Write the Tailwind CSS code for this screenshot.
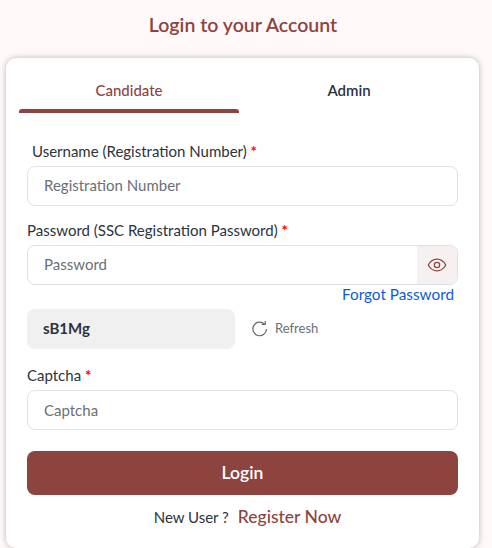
<!DOCTYPE html>
<html lang="en">
<head>
    <meta charset="UTF-8">
    <meta name="viewport" content="width=device-width, initial-scale=1.0">
    <title>Login</title>
    <script src="https://cdn.jsdelivr.net/npm/@tailwindcss/browser@4"></script>
</head>
<body class="bg-[#fffaf9] h-[548px] overflow-hidden font-['Lato','Noto_Sans',sans-serif] text-[#2b3340]">
    <h1 class="h-[58px] pr-[6px] pt-[14px] text-center text-[19.500px] leading-[22px] font-semibold text-[#8e443e]">Login to your Account</h1>

    <div class="ml-[6px] w-[473px] h-[490px] bg-white rounded-[10px] shadow-[0_0_6px_rgba(0,0,0,0.28)]">
        <div class="flex pl-[13px] pr-[13px]">
            <div class="w-[220px] h-[55px] flex flex-col justify-between pt-[23px] text-center text-[15px] leading-[18px] font-medium text-[#8e443e]">
                <span>Candidate</span>
                <div class="h-[4px] bg-[#8e443e] rounded-t-[3px]"></div>
            </div>
            <div class="flex-1 h-[55px] pt-[23px] pr-[7px] text-center text-[15px] leading-[18px] font-semibold">Admin</div>
        </div>

        <form class="px-[21px]">
            <label class="block mt-[29px] ml-[5px] text-[15px] leading-[18px]">Username (Registration Number) <span class="text-[#f00] font-bold">*</span></label>
            <input type="text" placeholder="Registration Number" class="block mt-[6px] w-[431px] h-[40px] px-[16px] pb-[2px] text-[15px] border border-[#dfe1e6] rounded-[8px] placeholder:text-[#6b6f76]">

            <label class="block mt-[15px] text-[15px] leading-[18px]">Password (SSC Registration Password) <span class="text-[#f00] font-bold">*</span></label>
            <div class="flex mt-[6px] w-[431px] h-[40px] border border-[#dfe1e6] rounded-[8px] overflow-hidden">
                <input type="password" placeholder="Password" class="flex-1 min-w-0 px-[16px] pb-[2px] text-[15px] placeholder:text-[#6b6f76]">
                <div class="w-[40px] flex items-center justify-center bg-[#f7f0f0]">
                    <svg class="w-[20px] h-[20px]" viewBox="0 0 24 24" fill="none" stroke="#8e443e" stroke-width="1.500"><path d="M1.500 12C4 7.500 7.700 5 12 5s8 2.500 10.500 7c-2.500 4.500-6.200 7-10.500 7s-8-2.500-10.500-7z"/><circle cx="12" cy="12" r="3.200"/></svg>
                </div>
            </div>
            <div class="pr-[4px] text-right text-[15.300px] leading-[18px] text-[#0d5bdd]">Forgot Password</div>

            <div class="flex items-center mt-[6px]">
                <div class="w-[208px] h-[40px] pl-[16px] pb-[2px] flex items-center bg-[#f0f0f0] rounded-[8px] text-[15px] font-bold">sB1Mg</div>
                <svg class="ml-[16px] w-[18px] h-[18px]" viewBox="0 0 18 18" fill="none" stroke="#666" stroke-width="1.200"><path d="M15.500 9a6.800 6.800 0 1 1-2.200-5.100"/><path d="M14.200 1v3.400h-3.400"/></svg>
                <span class="ml-[6px] text-[13px] text-[#6b6f76]">Refresh</span>
            </div>

            <label class="block mt-[17px] text-[15px] leading-[18px]">Captcha <span class="text-[#f00] font-bold">*</span></label>
            <input type="text" placeholder="Captcha" class="block mt-[6px] w-[431px] h-[40px] px-[16px] pb-[1px] text-[15px] border border-[#dfe1e6] rounded-[8px] placeholder:text-[#6b6f76]">

            <button type="button" class="block mt-[21px] w-[431px] h-[44px] bg-[#8e443e] rounded-[8px] text-white text-[17.500px] font-semibold">Login</button>

            <div class="mt-[9px] pl-[10px] flex justify-center items-center gap-[9px]">
                <span class="text-[15px]">New User ?</span>
                <span class="text-[17.500px] font-medium text-[#8e443e]">Register Now</span>
            </div>
        </form>
    </div>
</body>
</html>
